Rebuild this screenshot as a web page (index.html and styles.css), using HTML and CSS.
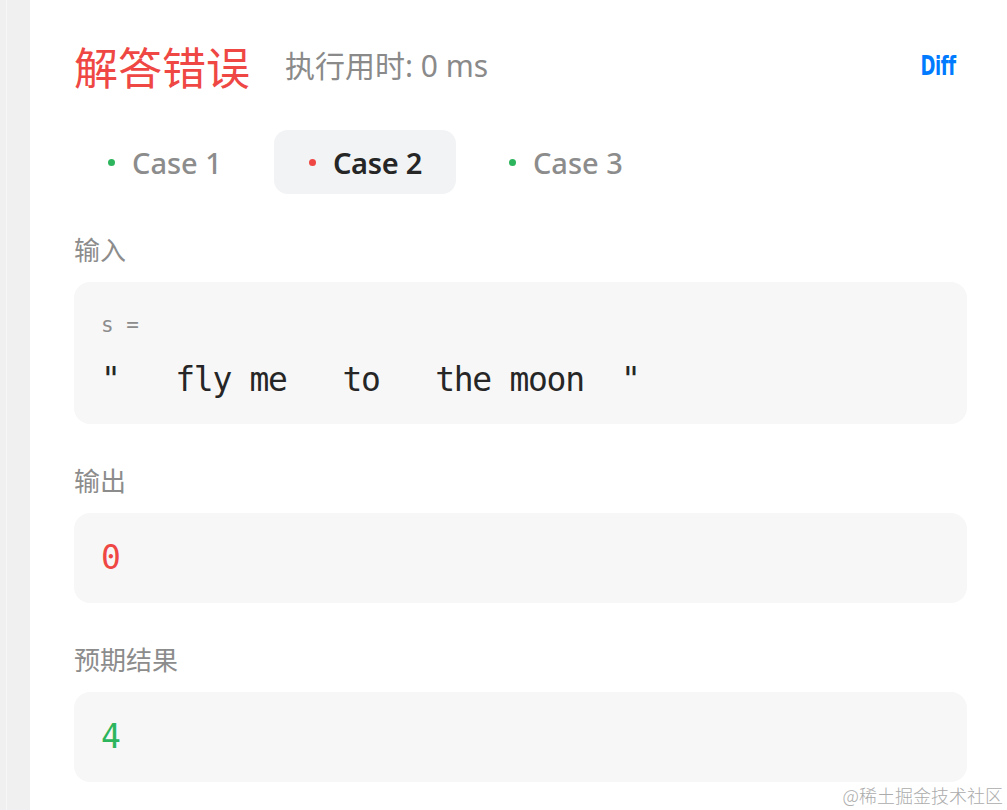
FILE: index.html
```html
<!DOCTYPE html>
<html lang="zh-CN">
<head>
<meta charset="utf-8">
<title>解答错误</title>
<link rel="stylesheet" href="styles.css">
</head>
<body>
<div class="page">
  <aside class="rail"><span class="rail-line"></span></aside>
  <main class="panel">
    <header class="result-head">
      <h1 class="verdict">解答错误</h1>
      <span class="runtime">执行用时: 0 ms</span>
      <a class="diff">Diff</a>
    </header>
    <nav class="cases">
      <div class="case"><span class="dot dot-ok"></span><span>Case 1</span></div>
      <div class="case case-active"><span class="dot dot-bad"></span><span>Case 2</span></div>
      <div class="case"><span class="dot dot-ok"></span><span>Case 3</span></div>
    </nav>
    <section class="block">
      <div class="label">输入</div>
      <div class="box box-input">
        <div class="var-name">s =</div>
        <div class="code">"   fly me   to   the moon  "</div>
      </div>
    </section>
    <section class="block">
      <div class="label">输出</div>
      <div class="box"><div class="code code-bad">0</div></div>
    </section>
    <section class="block">
      <div class="label">预期结果</div>
      <div class="box"><div class="code code-ok">4</div></div>
    </section>
  </main>
  <div class="watermark">@稀土掘金技术社区</div>
</div>
</body>
</html>
```

FILE: styles.css
```css
* { box-sizing: border-box; }
html, body { margin: 0; padding: 0; background: #ffffff; }
body {
  font-family: "Noto Sans", "Noto Sans CJK SC", sans-serif;
  width: 1007px;
  height: 810px;
  overflow: hidden;
}
.page {
  position: relative;
  display: flex;
  width: 1007px;
  height: 810px;
}
.rail {
  width: 30px;
  flex: none;
  background: #f0f0f0;
  display: flex;
  padding-left: 6px;
}
.rail-line {
  width: 1px;
  background: #f7f7f7;
}
.panel {
  flex: 1;
  padding: 44px 40px 0 44px;
}
.result-head {
  display: flex;
  align-items: center;
  height: 44px;
}
.verdict {
  margin: 0;
  font-family: "Noto Sans CJK SC", sans-serif;
  font-weight: 400;
  font-size: 44px;
  line-height: 44px;
  color: #ef4743;
}
.runtime {
  margin-left: 35px;
  font-family: "Noto Sans", "Noto Sans CJK SC", sans-serif;
  font-size: 30px;
  color: #8a8a8a;
  line-height: 44px;
}
.diff {
  display: inline-block;
  margin-left: auto;
  margin-right: 11px;
  font-family: "DejaVu Sans Condensed", "DejaVu Sans", sans-serif;
  font-weight: 700;
  font-size: 27px;
  letter-spacing: -0.5px;
  color: #007aff;
  line-height: 44px;
  transform: scaleX(0.74);
  transform-origin: right center;
}
.cases {
  display: flex;
  gap: 18px;
  margin-top: 42px;
  margin-left: -1px;
}
.case {
  display: flex;
  align-items: center;
  gap: 17px;
  height: 64px;
  padding: 0 34px 0 35px;
  border-radius: 14px;
  font-size: 29px;
  font-weight: 500;
  color: #8c8c8c;
}
.case-active {
  background: #f2f3f5;
  color: #262626;
  font-weight: 600;
  letter-spacing: -0.3px;
}
.dot {
  width: 7px;
  height: 7px;
  border-radius: 50%;
  flex: none;
}
.dot-ok { background: #2db55d; }
.dot-bad { background: #ef4743; }
.block {
  margin-top: 37px;
}
.block + .block { margin-top: 38px; }
.label {
  font-family: "Noto Sans CJK SC", sans-serif;
  font-size: 26px;
  line-height: 36px;
  color: #8c8c8c;
}
.box {
  margin-top: 15px;
  background: #f7f7f7;
  border-radius: 16px;
  padding: 22px 27px;
}
.box-input {
  padding: 28px 27px 21px;
}
.var-name {
  font-family: "DejaVu Sans Mono", monospace;
  font-size: 21px;
  line-height: 30px;
  color: #8c8c8c;
  margin-bottom: 17px;
}
.code {
  font-family: "DejaVu Sans Mono", monospace;
  font-size: 33px;
  letter-spacing: -1.3px;
  line-height: 46px;
  color: #262626;
  white-space: pre;
}
.code-bad { color: #ef4743; }
.code-ok { color: #2db55d; }
.watermark {
  position: absolute;
  right: 4px;
  bottom: 4px;
  font-family: "Noto Sans CJK SC", sans-serif;
  font-weight: 300;
  font-size: 18px;
  line-height: 22px;
  color: #ababab;
  text-shadow: 0 0 2px #ffffff;
}
```
